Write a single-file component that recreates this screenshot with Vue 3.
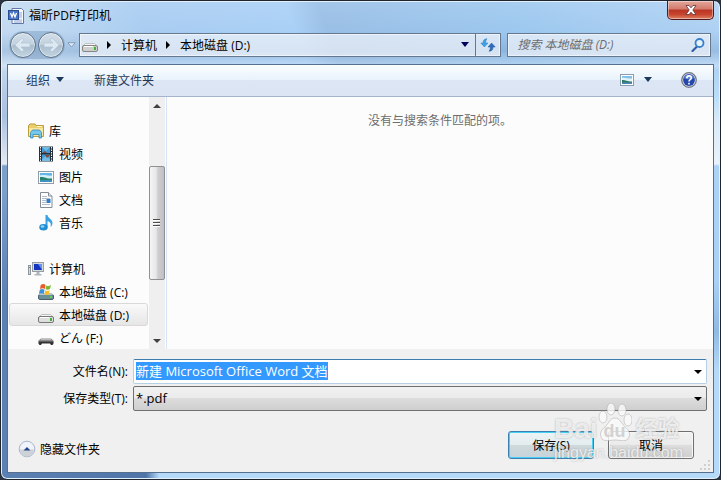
<template>
  <div class="window">
    <!-- Title bar -->
    <header class="titlebar">
      <svg class="app-icon" viewBox="0 0 16 16" width="16" height="16">
        <path d="M4 .5h9.500l2 2v13H4z" fill="#f5f8fd" stroke="#6076a8" />
        <path d="M11 5h3M11 7h3M11 9h3M6 12h8M6 14h8" stroke="#8fa5cf" />
        <rect x=".5" y="2.500" width="10" height="9" fill="#4a74c4" stroke="#2b4c93" />
        <path d="M2.500 5l1.500 4 1.500-4L7 9l1.500-4" fill="none" stroke="#fff" stroke-width="1.300" />
      </svg>
      <h1 class="title">福昕PDF打印机</h1>
      <button class="close" type="button" aria-label="关闭">
        <svg viewBox="0 0 12 10" width="12" height="10">
          <path d="M1 .5h3l2 2.300L8 .5h3L7.800 5 11 9.500H8L6 7.200 4 9.500H1L4.200 5z" fill="#fff" stroke="#5b3338" stroke-width=".8" />
        </svg>
      </button>
    </header>

    <!-- Address row -->
    <nav class="navrow">
      <div class="history">
        <button class="round" type="button" aria-label="后退">
          <svg viewBox="0 0 18 18" width="18" height="18">
            <path d="M8 2 1 9l7 7 2-2-3-3h9V7H7l3-3z" fill="#dce8f2" stroke="#b3c4d3" stroke-width=".7" />
          </svg>
        </button>
        <button class="round" type="button" aria-label="前进">
          <svg viewBox="0 0 18 18" width="18" height="18">
            <path d="m10 2 7 7-7 7-2-2 3-3H2V7h9L8 4z" fill="#dce8f2" stroke="#b3c4d3" stroke-width=".7" />
          </svg>
        </button>
      </div>
      <svg class="recent" viewBox="0 0 9 6" width="9" height="6">
        <path d="M.8.7h7.400L4.500 5z" fill="#dbe9f6" stroke="#7891ae" stroke-width=".8" />
      </svg>
      <div class="address">
        <svg viewBox="0 0 16 16" width="16" height="16">
          <path d="M3.500 6.500h9l3 3H.5z" fill="#f5f5f5" stroke="#b5b5b5" stroke-width=".8" />
          <rect x=".5" y="8.500" width="15" height="6" rx="1.500" fill="#d0cfd0" stroke="#858585" />
          <path d="M2 9.500h9" stroke="#fff" />
          <rect x="12" y="10" width="2" height="3" fill="#3cb62c" />
        </svg>
        <template v-for="part in path" :key="part">
          <svg class="crumb-arrow" viewBox="0 0 4 8" width="4" height="8"><path d="M0 0l4 4-4 4z" /></svg>
          <a class="crumb" href="#">{{ part }}</a>
        </template>
        <button class="address-drop" type="button" aria-label="以前的位置">
          <svg viewBox="0 0 8 5" width="8" height="5"><path d="M0 0h8L4 5z" fill="#00005e" /></svg>
        </button>
        <button class="refresh" type="button" aria-label="刷新">
          <svg viewBox="0 0 16 14" width="16" height="14">
            <path d="M7 .8C4 .8 3 2.500 3 5H.8l3.600 4L8 5H5.700C5.700 3 6 2 7 .8z" fill="#3d9fe4" stroke="#2f80c6" stroke-width=".5" />
            <path d="M9 13.200c3 0 4-1.700 4-4.200h2.200l-3.600-4L8 9h2.300c0 2-.3 3-1.300 4.200z" fill="#2f6cba" stroke="#205aa3" stroke-width=".5" />
          </svg>
        </button>
      </div>
      <div class="search">
        <input v-model="query" type="text" placeholder="搜索 本地磁盘 (D:)" aria-label="搜索" />
        <svg viewBox="0 0 14 14" width="14" height="14">
          <path d="M6 8.500 1.500 13" stroke="#2f5da3" stroke-width="2.200" stroke-linecap="round" />
          <circle cx="8.500" cy="5" r="4" fill="#e4f2fc" stroke="#3a7fc9" stroke-width="1.800" />
        </svg>
      </div>
    </nav>

    <main class="body">
      <!-- Toolbar -->
      <div class="toolbar">
        <button class="tool organize" type="button">
          组织
          <svg viewBox="0 0 8 5" width="8" height="5"><path d="M0 0h8L4 5z" /></svg>
        </button>
        <button class="tool" type="button">新建文件夹</button>
        <button class="tool view" type="button" aria-label="更改视图">
          <svg viewBox="0 0 14 12" width="14" height="12">
            <rect x=".5" y=".5" width="13" height="11" fill="#fff" stroke="#8d9db0" />
            <rect x="2" y="2" width="10" height="8" fill="#7fc1ec" />
            <path d="M2 4c3-1 6 1 10 .5V8H2z" fill="#e3f4f7" />
            <path d="M2 6c4 0 5 1.500 10 1.500V9H2z" fill="#2d7a66" />
            <path d="M2 8.500h10V10H2z" fill="#4a87bd" />
          </svg>
          <svg viewBox="0 0 8 5" width="8" height="5"><path d="M0 0h8L4 5z" /></svg>
        </button>
        <button class="tool" type="button" aria-label="帮助">
          <svg viewBox="0 0 16 16" width="16" height="16">
            <circle cx="8" cy="8" r="7.300" fill="#d8dce5" stroke="#70757f" stroke-width="1.200" />
            <circle cx="8" cy="8" r="5.900" fill="#2447ac" />
            <path d="M3 6a5.300 5.300 0 0 1 10 0c-2 1.500-7 2-10 0z" fill="#5f82d6" />
            <path d="M5.800 6.300C5.800 3 10.300 3.300 10.300 6 10.300 7.800 8 7.600 8 9.500M8 10.800v1.700" fill="none" stroke="#fff" stroke-width="1.600" />
          </svg>
        </button>
      </div>

      <div class="content">
        <!-- Folder tree -->
        <ul class="tree">
          <li v-for="item in tree" :key="item.label">
            <button
              type="button"
              class="node"
              :class="{ child: item.child, active: item.id === selected, group: item.id === 'computer' }"
              @click="selected = item.id"
            >
              <svg v-if="item.id === 'library'" viewBox="0 0 16 16" width="16" height="16">
                <path d="M.5 2.500 2 1h5l1 1.500h7.500v11H.5z" fill="#e9ce6b" stroke="#bd9c3d" />
                <path d="M1 5h14v8H1z" fill="#f8e79d" />
                <path d="M9 3.500h5" stroke="#fff7ce" />
                <path d="M2.500 15V9.500l2-2.500h7l2 2.500V15H11v-3.500H5V15z" fill="#75c7ec" stroke="#3588b8" stroke-width=".8" />
              </svg>
              <svg v-else-if="item.id === 'video'" viewBox="0 0 16 16" width="16" height="16">
                <rect x="1" y=".5" width="14" height="15" fill="#26303a" />
                <path d="M4 1h8v6H4zM4 8.500h8V15H4z" fill="#429bd6" />
                <path d="M4 1l4 4 4-4zM4 13l4-3 4 3v2H4z" fill="#70bce6" />
                <path d="M4 7l3-2 2 2zM7 9l5 0-3 3z" fill="#8b4a35" />
                <path d="M2.500 1v14M13.500 1v14" stroke="#f2f2f2" stroke-width="1" stroke-dasharray="1.500 1" />
              </svg>
              <svg v-else-if="item.id === 'picture'" viewBox="0 0 16 16" width="16" height="16">
                <rect x=".5" y="2.500" width="15" height="12" fill="#fff" stroke="#939da6" />
                <path d="M2 4h12v9H2z" fill="#64b6e8" />
                <path d="M2 6.500c4-1.500 8 1 12 0V10H2z" fill="#d7f0f7" />
                <path d="M2 8c5-.5 6 2 12 1.500V11H2z" fill="#27836a" />
                <path d="M2 11h12v2H2z" fill="#3f91be" />
              </svg>
              <svg v-else-if="item.id === 'document'" viewBox="0 0 16 16" width="16" height="16">
                <path d="M2.500.5h8l3.500 3.500v11.500H2.500z" fill="#fff" stroke="#858d96" />
                <path d="M10.500.5V4H14" fill="#e6ebef" stroke="#858d96" />
                <path d="M4 4.500h5M4 6.500h8M4 8.500h4M4 10.500h4M4 12.500h8" stroke="#b3bdcd" />
                <rect x="8.500" y="7" width="4" height="4" fill="#317ac6" />
              </svg>
              <svg v-else-if="item.id === 'music'" viewBox="0 0 16 16" width="16" height="16">
                <path d="M7.500 0h2c0 3 5 4 5 8 0 2-1 3-2 4 1-4-.5-5-3-6v6h-2z" fill="#3ba1e2" />
                <ellipse cx="5.500" cy="12.300" rx="4.200" ry="3.300" fill="#238dd4" />
                <ellipse cx="4.500" cy="11.500" rx="1.800" ry="1.200" fill="#8fd3f7" />
              </svg>
              <svg v-else-if="item.id === 'computer'" viewBox="0 0 16 16" width="16" height="16">
                <rect x=".5" y="4.500" width="2" height="9" fill="#d7dce0" stroke="#8c959c" />
                <path d="M1 6.500h1" stroke="#4cae3d" />
                <rect x="4.500" y="1.500" width="11" height="9" fill="#d5d9dd" stroke="#959da5" />
                <path d="M6 3h8v6H6z" fill="#1534bf" />
                <path d="M10 3h4v6z" fill="#6093ee" />
                <path d="M8.500 11h3v2h2v1.500h-7V13h2z" fill="#aeb6bd" />
              </svg>
              <svg v-else-if="item.id === 'c'" viewBox="0 0 16 16" width="16" height="16">
                <rect x=".5" y="10.500" width="15" height="5" rx="1.500" fill="#6b8f99" stroke="#4c5f68" />
                <path d="M2 9h12l1 2H1z" fill="#b4c6cb" />
                <rect x="12" y="12" width="2" height="2" fill="#59d742" />
                <path d="M2.700 1C5-.5 6 0 7.500 1L6.800 5C5.500 4 4 4 2 5z" fill="#e65b28" />
                <path d="M8.300 1.500C10 2.500 11 2 13 1l-1 4c-1.500 1-3 1-4.500.3z" fill="#7cba32" />
                <path d="M1.800 5.800c1.500-1 3.200-1 4.700 0L5.700 10C4.500 9 3 9 .9 9.800z" fill="#3d91d8" />
                <path d="M7.300 6.200c1.500 1 2.800.8 4.300 0l-.8 4c-1.500 1-2.800.8-4.300 0z" fill="#fabd28" />
              </svg>
              <svg v-else-if="item.id === 'd'" viewBox="0 0 16 16" width="16" height="16">
                <path d="M3.500 7.500h9l3 3H.5z" fill="#f5f5f5" stroke="#b5b5b5" stroke-width=".8" />
                <rect x=".5" y="9.500" width="15" height="6" rx="1.500" fill="#dedede" stroke="#777" />
                <path d="M2 10.500h9" stroke="#fff" />
                <rect x="12" y="11" width="2" height="3" fill="#3cb62c" />
              </svg>
              <svg v-else viewBox="0 0 16 16" width="16" height="16">
                <path d="M3 8.500h10l2.500 2v2H.5v-2z" fill="#8a8a8a" />
                <path d="M3 9.500h10" stroke="#bbb" />
                <path d="M.5 11.500h15v2l-1 1.500H13l-1-1.500H4L3 15H1.500l-1-1.500z" fill="#333" />
              </svg>
              <span>{{ item.label }}</span>
            </button>
          </li>
        </ul>
        <div class="scrollbar">
          <button class="scroll-step" type="button" aria-label="向上滚动">
            <svg viewBox="0 0 8 4" width="8" height="4"><path d="M0 4h8L4 0z" /></svg>
          </button>
          <div class="track"></div>
          <div class="thumb">
            <svg viewBox="0 0 8 8" width="8" height="8">
              <path d="M0 .5h7M0 3.500h7M0 6.500h7" stroke="#4b4b4b" />
              <path d="M0 1.500h7M0 4.500h7M0 7.500h7" stroke="#fff" />
            </svg>
          </div>
          <div class="track"></div>
          <button class="scroll-step" type="button" aria-label="向下滚动">
            <svg viewBox="0 0 8 4" width="8" height="4"><path d="M0 0h8L4 4z" /></svg>
          </button>
        </div>
        <section class="files">
          <p>没有与搜索条件匹配的项。</p>
        </section>
      </div>

      <!-- File name, type and actions -->
      <form class="footer" @submit.prevent>
        <div class="field">
          <label for="file-name">文件名(N):</label>
          <div class="combo name-combo">
            <input id="file-name" ref="nameInput" v-model="fileName" type="text" />
            <svg viewBox="0 0 8 4" width="8" height="4"><path d="M0 0h8L4 4z" /></svg>
          </div>
        </div>
        <div class="field">
          <label for="file-type">保存类型(T):</label>
          <div class="combo type-combo">
            <select id="file-type" v-model="fileType">
              <option value="*.pdf">*.pdf</option>
            </select>
            <svg viewBox="0 0 8 4" width="8" height="4"><path d="M0 0h8L4 4z" /></svg>
          </div>
        </div>
        <div class="actions">
          <button class="toggle" type="button">
            <svg viewBox="0 0 18 18" width="18" height="18">
              <circle cx="9" cy="9" r="7.800" fill="#f0f3f9" stroke="#a9b4cf" />
              <path d="M2 9.500h14a7 7 0 0 1-14 0z" fill="#ccd2d6" />
              <path d="M5.500 10.500h7L9 7z" fill="#23448e" />
            </svg>
            隐藏文件夹
          </button>
          <button class="btn primary" type="submit">保存(S)</button>
          <button class="btn" type="button">取消</button>
          <div class="watermark">
            <div class="brand">
              <span class="bai">Bai</span>
              <span class="paw">
                <svg viewBox="0 0 34 38" width="34" height="38">
                  <ellipse cx="5" cy="14" rx="4" ry="6" />
                  <ellipse cx="13" cy="6" rx="4" ry="6" />
                  <ellipse cx="24" cy="7" rx="4" ry="6" />
                  <ellipse cx="30" cy="17" rx="4" ry="6" />
                  <path d="M17 15c5 0 6 5 10 9 4 3 6 7 3 12-3 3-9 1-13 1s-10 2-13-1c-3-5-1-9 3-12 4-4 5-9 10-9z" />
                </svg>
                <span class="du">du</span>
              </span>
              <span class="jingyan">经验</span>
            </div>
            <div class="site">jingyan.baidu.com</div>
          </div>
        </div>
        <svg class="grip" viewBox="0 0 10 10" width="10" height="10">
          <path d="M8 0h2v2H8zM4 4h2v2H4zM8 4h2v2H8zM0 8h2v2H0zM4 8h2v2H4zM8 8h2v2H8z" />
        </svg>
      </form>
    </main>
  </div>
</template>

<script setup>
import { onMounted, ref } from 'vue';

const path = ['计算机', '本地磁盘 (D:)'];

const tree = [
  { id: 'library', label: '库' },
  { id: 'video', label: '视频', child: true },
  { id: 'picture', label: '图片', child: true },
  { id: 'document', label: '文档', child: true },
  { id: 'music', label: '音乐', child: true },
  { id: 'computer', label: '计算机' },
  { id: 'c', label: '本地磁盘 (C:)', child: true },
  { id: 'd', label: '本地磁盘 (D:)', child: true },
  { id: 'f', label: 'どん (F:)', child: true },
];

const selected = ref('d');
const query = ref('');
const fileName = ref('新建 Microsoft Office Word 文档');
const fileType = ref('*.pdf');
const nameInput = ref(null);

onMounted(() => {
  nameInput.value.focus();
  nameInput.value.select();
});
</script>

<style>
body {
  background: #2c3440;
}
</style>

<style scoped>
* {
  box-sizing: border-box;
}

.window {
  display: flex;
  flex-direction: column;
  min-height: 100vh;
  padding: 0 6px 6px;
  border: 1px solid #20242c;
  border-radius: 7px;
  box-shadow: inset 0 0 0 1px #e3f1fd;
  background:
    linear-gradient(90deg, #5b80b2 0, #4f74a8 145px, #b5d9f9 158px) bottom / 100% 7px no-repeat,
    linear-gradient(transparent 64px, #b3c8e4 95px, #a9c2e0 115px, #e3ebf4 163px, #7c9fcc 165px, #7c9fcc 190px, #5b80b2 300px, #5b80b2 100%) left / 7px 100% no-repeat,
    linear-gradient(transparent 64px, #b9ddf8 95px, #d9eaf9 120px, #e8f3fc 163px, #acd2f6 165px, #a9d0f6 280px, #8fbae6 330px, #b5d9f9 370px, #b5d9f9 100%) right / 7px 100% no-repeat,
    linear-gradient(rgba(255, 255, 255, 0.1), rgba(255, 255, 255, 0) 30px, rgba(90, 130, 180, 0.25) 50px, rgba(255, 255, 255, 0.25) 65px, transparent 70px),
    linear-gradient(70deg, #c6dcf2 0, #c2daf1 180px, #a9cdf1 290px, #a9d0f6 430px, #99bfe6 460px, #9dc8ef 640px, #b0d2f3 100%);
  font-family: 'Open Sans', 'Noto Sans CJK SC', sans-serif;
  font-size: 12px;
  color: #000;
}

button,
input,
select {
  font: inherit;
  color: inherit;
}

button {
  padding: 0;
  border: none;
  background: none;
}

svg {
  flex: none;
}

/* Title bar */
.titlebar {
  display: flex;
  align-items: center;
  height: 29px;
  padding-left: 1px;
}

.title {
  flex: 1;
  margin: 0 0 0 5px;
  padding-bottom: 2px;
  font-size: 12px;
  font-weight: normal;
}

.close {
  display: flex;
  align-items: center;
  justify-content: center;
  align-self: flex-start;
  width: 47px;
  height: 19px;
  border: 1px solid #4d1a20;
  border-top: none;
  border-radius: 0 0 5px 5px;
  background: linear-gradient(#e3a89c 0, #d3796a 45%, #b93524 50%, #c8452f 75%, #dc8264 100%);
  box-shadow: inset 0 0 0 1px rgba(255, 255, 255, 0.4);
}

/* Address row */
.navrow {
  display: flex;
  align-items: center;
  height: 31px;
  margin-bottom: 3px;
  padding: 0 3px 2px 2px;
}

.history {
  display: flex;
  gap: 2px;
  padding: 1px;
  border-radius: 14px;
  background: rgba(110, 145, 185, 0.4);
}

.round {
  display: flex;
  align-items: center;
  justify-content: center;
  width: 26px;
  height: 26px;
  border: 1px solid #5f7489;
  border-radius: 50%;
  background: linear-gradient(#d3dfe9 0, #c2d1de 48%, #a9bccc 50%, #c3d5e2 100%);
  box-shadow: inset 0 0 0 1px rgba(255, 255, 255, 0.5);
}

.recent {
  margin: 0 3px 0 2px;
}

.address {
  display: flex;
  flex: 1;
  align-items: center;
  height: 24px;
  padding-left: 2px;
  border: 1px solid #66788d;
  background: rgba(237, 242, 248, 0.75);
  box-shadow: inset 0 0 0 1px rgba(255, 255, 255, 0.5);
}

.crumb-arrow {
  margin: 0 10px 0 9px;
}

.crumb {
  color: #000;
  text-decoration: none;
}

.address-drop {
  display: flex;
  align-items: center;
  justify-content: center;
  width: 20px;
  height: 22px;
  margin-left: auto;
}

.refresh {
  display: flex;
  align-items: center;
  justify-content: center;
  width: 25px;
  height: 22px;
  border-left: 1px solid #66788d;
}

.search {
  display: flex;
  align-items: center;
  width: 29%;
  height: 24px;
  margin-left: 6px;
  padding: 0 5px 0 9px;
  border: 1px solid #66788d;
  background: rgba(237, 242, 248, 0.75);
  box-shadow: inset 0 0 0 1px rgba(255, 255, 255, 0.5);
}

.search input {
  flex: 1;
  min-width: 0;
  padding: 0;
  border: none;
  outline: none;
  background: transparent;
}

.search input::placeholder {
  color: #6d6d6d;
  font-style: italic;
}

/* Dialog body */
.body {
  display: flex;
  flex: 1;
  flex-direction: column;
  border: 1px solid #566f8e;
  background: #f0f0f0;
}

.toolbar {
  display: flex;
  align-items: center;
  height: 32px;
  padding: 0 16px 2px 18px;
  border-bottom: 1px solid #a3b4cc;
  background: linear-gradient(#fbfdff 0, #e9f3fb 47%, #dce6f4 50%, #dbe5f3 100%);
}

.tool {
  display: flex;
  align-items: center;
  color: #1e395b;
}

.tool path:only-child {
  fill: #1e395b;
}

.organize {
  gap: 6px;
  margin-right: 30px;
}

.view {
  gap: 10px;
  margin: 0 29px 0 auto;
}

.content {
  display: flex;
  background: #fcfcfc;
}

.tree {
  width: 141px;
  margin: 0;
  padding: 22px 0 0;
  list-style: none;
}

.node {
  display: flex;
  align-items: center;
  gap: 5px;
  width: 139px;
  height: 23px;
  margin-left: 1px;
  padding-left: 18px;
  border: 1px solid transparent;
  border-radius: 3px;
  white-space: nowrap;
}

.node.child {
  padding-left: 28px;
}

.node.group {
  margin-top: 23px;
}

.node.active {
  border-color: #d9d9d9;
  background: linear-gradient(#fafafa, #e6e6e6);
}

.scrollbar {
  display: flex;
  flex-direction: column;
  width: 16px;
  background: #efefef;
}

.scroll-step {
  display: flex;
  align-items: center;
  justify-content: center;
  height: 17px;
}

.scroll-step path {
  fill: #404040;
}

.track {
  flex: 12;
}

.thumb {
  display: flex;
  flex: 26;
  align-items: center;
  justify-content: center;
  border: 1px solid #919191;
  border-radius: 2px;
  background: linear-gradient(90deg, #f5f5f5 0, #e6e6e8 45%, #cfcfd3 55%, #bebec4 100%);
}

.files {
  flex: 1;
  margin-left: 1px;
  border-left: 1px solid #d6e5f5;
  color: #6d6d6d;
  text-align: center;
}

.files p {
  margin: 15px 0;
  line-height: 18px;
}

/* Lower panel */
.footer {
  display: flex;
  flex: 1;
  flex-direction: column;
  gap: 2px;
  position: relative;
  padding: 10px 6px 0 10px;
}

.field {
  display: flex;
  align-items: center;
}

.field label {
  width: 110px;
  margin-right: 5px;
  padding-bottom: 1px;
  text-align: right;
}

.combo {
  display: flex;
  flex: 1;
  align-items: center;
  position: relative;
  height: 25px;
  border-radius: 2px;
}

.combo svg {
  position: absolute;
  right: 4px;
  pointer-events: none;
}

.combo input,
.combo select {
  flex: 1;
  min-width: 0;
  padding: 0 2px 2px;
  border: none;
  outline: none;
  appearance: none;
  background: transparent;
  font-size: 13px;
}

.combo input::selection {
  background: #3399ff;
  color: #fff;
}

.name-combo {
  border: 1px solid #b5cfe7;
  border-top-color: #3d7bad;
  background: #fff;
}

.type-combo {
  border: 1px solid #707070;
  background: linear-gradient(#f1f1f1 0, #ebebeb 48%, #dcdcdc 50%, #cfcfcf 100%);
}

.actions {
  display: flex;
  align-items: center;
  gap: 14px;
  position: relative;
  margin: 18px 13px 0 0;
}

.toggle {
  display: flex;
  align-items: center;
  gap: 4px;
  margin-right: auto;
  padding-top: 8px;
}

.btn {
  width: 86px;
  height: 28px;
  border: 1px solid #707070;
  border-radius: 3px;
  background: linear-gradient(#f2f2f2 0, #ebebeb 48%, #dddddd 50%, #cfcfcf 100%);
  box-shadow: inset 0 0 0 1px #f7f7f7;
}

.primary {
  border-color: #3c7fb1;
  background: linear-gradient(#eef4f6 0, #e3ecef 48%, #cfd9dc 50%, #c6d3d8 100%);
  box-shadow: inset 0 0 0 1px #48d0f4;
}

.watermark {
  position: absolute;
  right: 12px;
  bottom: -6px;
  width: 128px;
  color: rgba(250, 250, 250, 0.8);
  font-family: 'Liberation Sans', 'Noto Sans CJK SC', sans-serif;
  text-shadow: 0 0 2px rgba(130, 130, 130, 0.6);
  pointer-events: none;
}

.brand {
  display: flex;
  align-items: flex-end;
  height: 38px;
}

.bai {
  font-size: 28px;
  font-weight: bold;
  line-height: 24px;
}

.paw {
  display: flex;
  align-items: flex-end;
  justify-content: center;
  position: relative;
}

.paw svg {
  fill: rgba(250, 250, 250, 0.8);
  stroke: rgba(150, 150, 150, 0.4);
}

.du {
  position: absolute;
  color: #d2d2d2;
  font-size: 18px;
  font-weight: bold;
  line-height: 20px;
  text-shadow: none;
}

.jingyan {
  margin-left: 4px;
  font-size: 22px;
  font-weight: bold;
  line-height: 24px;
}

.site {
  font-size: 16px;
  line-height: 24px;
}

.grip {
  position: absolute;
  right: 3px;
  bottom: 2px;
  fill: #cfcfcf;
}
</style>
